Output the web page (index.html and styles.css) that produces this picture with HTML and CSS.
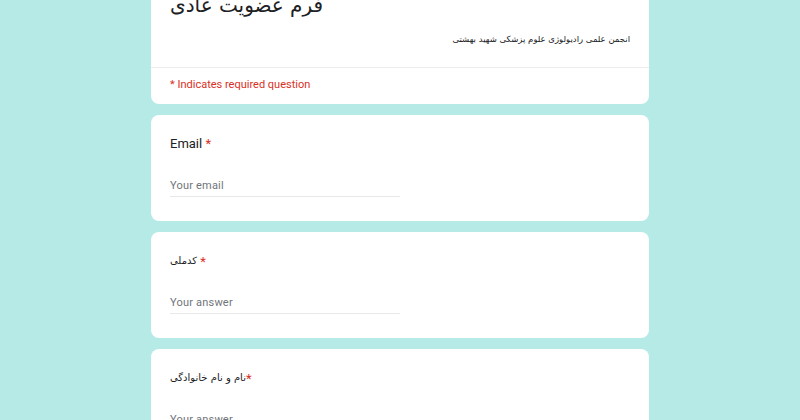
FILE: index.html
```html
<!DOCTYPE html>
<html lang="fa">
<head>
<meta charset="utf-8">
<link rel="stylesheet" href="styles.css">
</head>
<body>
<main class="form">
  <section class="card header-card">
    <div class="header-body">
      <h1 class="title">فرم عضویت عادی</h1>
      <p class="desc">انجمن علمی رادیولوژی علوم پزشکی شهید بهشتی</p>
    </div>
    <div class="required-note">* Indicates required question</div>
  </section>

  <section class="card question">
    <div class="label">Email <span class="star">*</span></div>
    <div class="input"><span class="placeholder">Your email</span></div>
  </section>

  <section class="card question">
    <div class="label"><span class="fa">کدملی</span> <span class="star">*</span></div>
    <div class="input"><span class="placeholder">Your answer</span></div>
  </section>

  <section class="card question">
    <div class="label"><span class="fa">نام و نام خانوادگی</span><span class="star">*</span></div>
    <div class="input"><span class="placeholder">Your answer</span></div>
  </section>
</main>
</body>
</html>
```

FILE: styles.css
```css
html, body {
  margin: 0;
  padding: 0;
}
body {
  background: #b5eae7;
  font-family: Roboto, "DejaVu Sans", sans-serif;
  color: #202124;
  height: 420px;
  overflow: hidden;
}
.form {
  width: 498px;
  margin: -30px auto 0;
  display: flex;
  flex-direction: column;
  gap: 11px;
}
.card {
  background: #ffffff;
  border-radius: 8px;
}
.header-body {
  padding: 19px 19px 21px;
  border-bottom: 1px solid #ececec;
}
.title {
  margin: 0;
  font-family: "DejaVu Sans", sans-serif;
  font-weight: normal;
  font-size: 20px;
  line-height: 32px;
  color: #202124;
  text-align: left;
}
.desc {
  margin: 11px 0 0;
  font-family: "DejaVu Sans", sans-serif;
  font-size: 8.5px;
  line-height: 14px;
  text-align: right;
  color: #202124;
}
.required-note {
  padding: 9px 19px 11px;
  font-size: 11px;
  line-height: 16px;
  color: #d93025;
}
.question {
  padding: 20px 19px 24px;
}
.label {
  font-size: 13px;
  line-height: 18px;
  height: 18px;
  color: #202124;
}
.fa {
  font-family: "DejaVu Sans", sans-serif;
  font-size: 10px;
  line-height: 18px;
  vertical-align: 2px;
}
.star {
  color: #d93025;
}
.input {
  margin-top: 25px;
  width: 230px;
  height: 16px;
  font-size: 11px;
  line-height: 16px;
  border-bottom: 1px solid #e8e8e8;
  padding-bottom: 2px;
}
.placeholder {
  color: #70757a;
  letter-spacing: 0.2px;
}
```
